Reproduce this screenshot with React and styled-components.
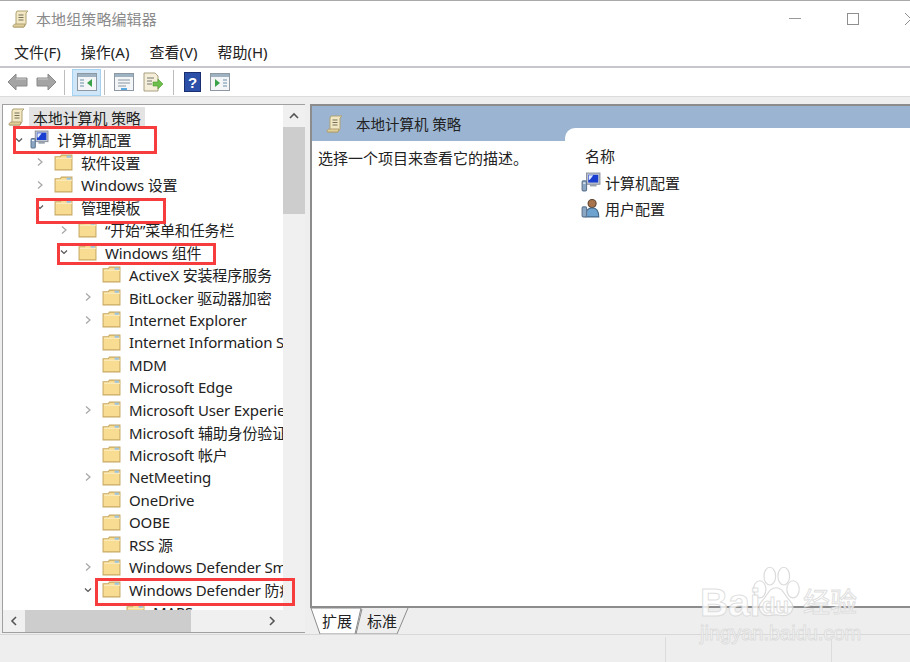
import React from 'react';
import styled, { createGlobalStyle } from 'styled-components';

const Global = createGlobalStyle`
  html, body { margin: 0; padding: 0; background: #fff; }
  body { font-family: "Noto Sans", "Noto Sans CJK SC", sans-serif; color: #222; }
`;

const Win = styled.div`
  position: relative;
  width: 910px;
  height: 662px;
  overflow: hidden;
  display: flex;
  flex-direction: column;
  background: #fff;
  border-top: 1px solid #a9a9a9;
  box-sizing: border-box;
`;

const TitleBar = styled.div`
  height: 35px;
  display: flex;
  align-items: center;
  padding-left: 12px;
  gap: 6px;
  flex-shrink: 0;
`;
const TitleText = styled.div`
  font-size: 15px;
  color: #8a8a8a;
  letter-spacing: 0.1px;
  flex: 1;
`;
const WinButtons = styled.div`
  display: flex;
  align-items: center;
`;
const MinBtn = styled.div`
  width: 12px;
  height: 1px;
  background: #9a9a9a;
  margin-right: 46px;
`;
const MaxBtn = styled.div`
  width: 10px;
  height: 10px;
  border: 1px solid #8f8f8f;
  margin-right: 46px;
`;
const CloseBtn = styled.svg`
  width: 12px;
  height: 12px;
  margin-right: -7px;
`;

const MenuBar = styled.div`
  height: 32px;
  display: flex;
  align-items: center;
  padding-left: 14px;
  gap: 20px;
  font-size: 15px;
  color: #222;
  border-bottom: 2px solid #c6c6cc;
  flex-shrink: 0;
  box-sizing: border-box;
`;

const ToolBar = styled.div`
  height: 28px;
  display: flex;
  align-items: center;
  padding-left: 7px;
  flex-shrink: 0;
`;
const ToolSep = styled.div`
  width: 1px;
  height: 25px;
  background: #bdbdbd;
  margin: 0 ${p => p.$gap || 3}px;
`;
const ToolBtn = styled.div`
  width: ${p => p.$w || 23}px;
  height: 27px;
  display: flex;
  align-items: center;
  justify-content: center;
  box-sizing: border-box;
  ${p => p.$active && 'background: #cfe6f8; border: 1px solid #a6d2f2;'}
`;

const Body = styled.div`
  flex: 1;
  background: #eeeeee;
  border-top: 1px solid #dcdcdc;
  display: flex;
  min-height: 0;
  padding: 7px 0 0 2px;
  gap: 5px;
`;

const LeftPane = styled.div`
  width: 303px;
  height: 529px;
  flex-shrink: 0;
  background: #fff;
  border: 1px solid #a0a0a0;
  box-sizing: border-box;
  display: grid;
  grid-template-columns: 280px 22px;
  grid-template-rows: 505px 22px;
`;
const Tree = styled.div`
  overflow: hidden;
  padding-top: 1px;
`;
const Row = styled.div`
  height: 22.5px;
  display: flex;
  align-items: center;
  white-space: nowrap;
  font-size: 15px;
  letter-spacing: -0.15px;
  padding-left: ${p => p.$indent}px;
  position: relative;
`;
const Chev = styled.svg`
  width: 8px;
  height: 8px;
  flex-shrink: 0;
  margin-right: ${p => p.$mr || 10}px;
`;
const NoChev = styled.div`
  width: 18px;
  flex-shrink: 0;
`;
const RowLabel = styled.span`
  margin-left: 8px;
  ${p => p.$sel && 'background: #e3e3e3; margin-left: 3px; padding: 0 4px;'}
`;
const VScroll = styled.div`
  background: #f0f0f0;
  display: flex;
  flex-direction: column;
  align-items: center;
`;
const VThumb = styled.div`
  width: 100%;
  height: 87px;
  background: #cdcdcd;
`;
const ScrollArrow = styled.div`
  height: 22px;
  width: 100%;
  display: flex;
  align-items: center;
  justify-content: center;
  flex-shrink: 0;
`;
const HScroll = styled.div`
  grid-column: 1 / 2;
  background: #f0f0f0;
  display: flex;
  align-items: center;
`;
const HThumb = styled.div`
  width: 166px;
  height: 100%;
  background: #cdcdcd;
`;
const HArrow = styled.div`
  width: 22px;
  height: 100%;
  display: flex;
  align-items: center;
  justify-content: center;
  flex-shrink: 0;
`;
const HSpace = styled.div`
  flex: 1;
`;
const Corner = styled.div`
  background: #f0f0f0;
`;

const RightCol = styled.div`
  flex: 1;
  display: flex;
  flex-direction: column;
  min-width: 0;
`;
const RightPane = styled.div`
  height: 504px;
  background: #fff;
  border: 2px solid #8c8c8c;
  border-right: none;
  box-sizing: border-box;
  position: relative;
  overflow: hidden;
`;
const Banner = styled.div`
  height: 35px;
  background: #9ab4d2;
  display: flex;
  align-items: center;
  padding-left: 14px;
  gap: 12px;
  font-size: 14.5px;
  color: #222;
`;
const Notch = styled.div`
  position: absolute;
  left: 253px;
  top: 22px;
  right: 0;
  height: 15px;
  background: #fff;
  border-top-left-radius: 10px;
`;
const Columns = styled.div`
  display: flex;
`;
const Desc = styled.div`
  width: 265px;
  padding: 6px 0 0 6px;
  font-size: 15px;
  box-sizing: border-box;
`;
const ListCol = styled.div`
  position: relative;
  font-size: 15px;
`;
const ColHead = styled.div`
  height: 28px;
  display: flex;
  align-items: center;
  padding-left: 8px;
`;
const ListRow = styled.div`
  height: 26px;
  display: flex;
  align-items: center;
  padding-left: 4px;
  gap: 4px;
`;

const Tabs = styled.div`
  height: 27px;
  display: flex;
  padding-left: 5px;
  position: relative;
`;
const TabSvg = styled.svg`
  position: absolute;
  left: 0;
  top: 0;
  width: 110px;
  height: 27px;
`;
const TabLabel = styled.span`
  position: relative;
  font-size: 15px;
  margin: 2px 0 0 ${p => p.$ml}px;
`;

const StatusBar = styled.div`
  position: absolute;
  left: 0;
  right: 0;
  bottom: 0;
  height: 27px;
  border-top: 1px solid #d8d8d8;
  background: #eeeeee;
`;
const StatusDiv = styled.div`
  position: absolute;
  top: 2px;
  bottom: 0;
  left: ${p => p.$x}px;
  width: 1px;
  background: #dcdcdc;
`;

const RedBox = styled.div`
  position: absolute;
  left: ${p => p.$x}px;
  top: ${p => p.$y}px;
  width: ${p => p.$w}px;
  height: ${p => p.$h}px;
  border: 3px solid #f63c3c;
  box-sizing: border-box;
  pointer-events: none;
`;

const Watermark = styled.div`
  position: absolute;
  left: 700px;
  top: 564px;
  width: 210px;
  height: 98px;
  color: rgba(255,255,255,0.8);
  font-family: "Liberation Sans", "Noto Sans CJK SC", sans-serif;
  pointer-events: none;
`;
const Mark = styled.div`
  position: absolute;
  left: ${p => p.$x}px;
  top: ${p => p.$y}px;
  font-size: ${p => p.$size}px;
  font-weight: ${p => p.$bold ? 700 : 400};
  line-height: 1;
  white-space: nowrap;
  -webkit-text-stroke: 1px rgba(215,215,215,0.8);
`;
const Paw = styled.svg`
  position: absolute;
  left: 52px;
  top: 1px;
`;

const Scroll = ({ size = 18 }) => (
  <svg width={size} height={size + 2} viewBox="0 0 18 20" style={{ flexShrink: 0 }}>
    <path d="M5 2h11l-2 2v11l-2 3H2l2-3V4z" fill="#f2e8c4" stroke="#b0a173" strokeWidth="1" />
    <path d="M1 18c0-2 1-3 3-3h9l-1 3z" fill="#e0cf9a" stroke="#b0a173" strokeWidth="1" />
    <path d="M6.5 6h5M6.5 8.5h5M6.5 11h5" stroke="#77705a" strokeWidth="1" />
  </svg>
);

const Folder = () => (
  <svg width="19" height="19" viewBox="0 0 18 18" style={{ flexShrink: 0 }}>
    <path d="M1 3.5h5l1-1.5h10v14H1z" fill="#f8dc92" stroke="#c8a964" strokeWidth="1" />
    <path d="M2 5h15" stroke="#fbeec2" strokeWidth="1" />
    <path d="M12 2.5h4v2h-4z" fill="#9cc3e0" />
  </svg>
);

const Computer = ({ size = 19 }) => (
  <svg width={size} height={size} viewBox="0 0 18 18" style={{ flexShrink: 0 }}>
    <rect x="5" y="1" width="12" height="10" fill="#c8ccd4" stroke="#8b93a0" />
    <rect x="6.5" y="2.5" width="9" height="7" fill="#1a3fd0" />
    <path d="M7 3h4l-3 4H7z" fill="#dfe9ff" />
    <path d="M8 11h6v2H8z" fill="#9aa2ae" />
    <rect x="1" y="8" width="4" height="9" rx="1" fill="#8ba7c4" stroke="#5f7690" />
    <path d="M2 10h2" stroke="#fff" />
  </svg>
);

const UserIcon = () => (
  <svg width="20" height="20" viewBox="0 0 18 18" style={{ flexShrink: 0 }}>
    <circle cx="10" cy="5" r="3.6" fill="#a9744c" stroke="#5f4330" />
    <path d="M4 17c0-5 2-8 6-8s6 3 6 8z" fill="#6fa3cf" stroke="#44698a" />
    <rect x="1" y="8" width="4" height="9" rx="1" fill="#8ba7c4" stroke="#5f7690" />
  </svg>
);

const Right = () => (
  <Chev viewBox="0 0 8 8"><path d="M2 0.5L6 4L2 7.5" fill="none" stroke="#a6a6a6" strokeWidth="1.2" /></Chev>
);
const Down = ({ mr }) => (
  <Chev $mr={mr} viewBox="0 0 8 8"><path d="M1 2.5L4 5.5L7 2.5" fill="none" stroke="#555" strokeWidth="1.2" /></Chev>
);

const Arrow = ({ flip }) => (
  <svg width="21" height="20" viewBox="0 0 21 20" style={flip ? { transform: 'scaleX(-1)' } : undefined}>
    <path d="M1 10l8-8v4h11v8H9v4z" fill="#a4a4a4" stroke="#8a8a8a" />
    <path d="M9 7h10" stroke="#c9c9c9" />
  </svg>
);

const WindowGlyph = ({ children }) => (
  <svg width="20" height="18" viewBox="0 0 20 18">
    <rect x="0.5" y="0.5" width="19" height="17" fill="#f3f5f6" stroke="#8d98a3" />
    <rect x="1" y="1" width="18" height="3" fill="#9fb2c2" />
    {children}
  </svg>
);

const rows = [
  { icon: 'computer', label: '计算机配置', indent: 12, open: true, mr: 7 },
  { label: '软件设置', indent: 33, closed: true },
  { label: 'Windows 设置', indent: 33, closed: true },
  { label: '管理模板', indent: 33, open: true },
  { label: '“开始”菜单和任务栏', indent: 57, closed: true },
  { label: 'Windows 组件', indent: 57, open: true },
  { label: 'ActiveX 安装程序服务', indent: 81 },
  { label: 'BitLocker 驱动器加密', indent: 81, closed: true },
  { label: 'Internet Explorer', indent: 81, closed: true },
  { label: 'Internet Information Services', indent: 81 },
  { label: 'MDM', indent: 81 },
  { label: 'Microsoft Edge', indent: 81 },
  { label: 'Microsoft User Experience', indent: 81, closed: true },
  { label: 'Microsoft 辅助身份验证器', indent: 81 },
  { label: 'Microsoft 帐户', indent: 81 },
  { label: 'NetMeeting', indent: 81, closed: true },
  { label: 'OneDrive', indent: 81 },
  { label: 'OOBE', indent: 81 },
  { label: 'RSS 源', indent: 81 },
  { label: 'Windows Defender SmartScreen', indent: 81, closed: true },
  { label: 'Windows Defender 防病毒程序', indent: 81, open: true },
  { label: 'MAPS', indent: 105 },
];

const Small = ({ d }) => (
  <svg width="10" height="10" viewBox="0 0 10 10"><path d={d} fill="none" stroke="#555" strokeWidth="1.6" /></svg>
);

export default function App() {
  return (
    <Win>
      <Global />
      <TitleBar>
        <Scroll />
        <TitleText>本地组策略编辑器</TitleText>
        <WinButtons>
          <MinBtn />
          <MaxBtn />
          <CloseBtn viewBox="0 0 12 12"><path d="M0 0L12 12M12 0L0 12" stroke="#8f8f8f" /></CloseBtn>
        </WinButtons>
      </TitleBar>
      <MenuBar>
        <span>文件(F)</span>
        <span>操作(A)</span>
        <span>查看(V)</span>
        <span>帮助(H)</span>
      </MenuBar>
      <ToolBar>
        <Arrow />
        <ToolBtn $w={8} />
        <Arrow flip />
        <ToolSep $gap={7} />
        <ToolBtn $w={29} $active>
          <WindowGlyph>
            <path d="M3 7h4M3 10h4M3 13h4" stroke="#6a8fa8" />
            <path d="M15 6v8l-5-4z" fill="#3aa34a" />
          </WindowGlyph>
        </ToolBtn>
        <ToolSep />
        <ToolBtn $w={31}>
          <WindowGlyph>
            <path d="M4 7h12M4 10h12M4 13h8" stroke="#8a97a3" />
            <rect x="7" y="15" width="6" height="2" fill="#59a9e0" />
          </WindowGlyph>
        </ToolBtn>
        <ToolBtn $w={28}>
          <svg width="21" height="20" viewBox="0 0 21 20">
            <path d="M1 1h11l3 3v15H1z" fill="#f5efd9" stroke="#a9a081" />
            <path d="M4 6h7M4 9h5M4 12h5" stroke="#777" />
            <path d="M10 10h5V7l5 5-5 5v-3h-5z" fill="#6cc04a" stroke="#4b9a34" strokeWidth="0.6" />
          </svg>
        </ToolBtn>
        <ToolSep $gap={6} />
        <ToolBtn $w={24}>
          <svg width="17" height="20" viewBox="0 0 17 20">
            <rect width="17" height="20" fill="#2c4fa8" />
            <rect x="0.5" y="0.5" width="16" height="19" fill="none" stroke="#1a2f70" />
            <text x="8.5" y="15.5" textAnchor="middle" fontSize="15" fontWeight="700" fontFamily="Liberation Sans" fill="#fff">?</text>
          </svg>
        </ToolBtn>
        <ToolBtn $w={32}>
          <WindowGlyph>
            <path d="M5 6v8l5-4z" fill="#3aa34a" />
            <path d="M13 7h4M13 10h4M13 13h4" stroke="#6a8fa8" />
          </WindowGlyph>
        </ToolBtn>
      </ToolBar>
      <Body>
        <LeftPane>
          <Tree>
            <Row $indent={5}>
              <Scroll />
              <RowLabel $sel>本地计算机 策略</RowLabel>
            </Row>
            {rows.map(r => (
              <Row $indent={r.indent} key={r.label}>
                {r.open ? <Down mr={r.mr} /> : r.closed ? <Right /> : <NoChev />}
                {r.icon === 'computer' ? <Computer /> : <Folder />}
                <RowLabel>{r.label}</RowLabel>
              </Row>
            ))}
          </Tree>
          <VScroll>
            <ScrollArrow><Small d="M1 7l4-4 4 4" /></ScrollArrow>
            <VThumb />
          </VScroll>
          <HScroll>
            <HArrow><Small d="M7 1L3 5l4 4" /></HArrow>
            <HThumb />
            <HSpace />
            <HArrow><Small d="M3 1l4 4-4 4" /></HArrow>
          </HScroll>
          <Corner />
        </LeftPane>
        <RightCol>
          <RightPane>
            <Banner>
              <Scroll />
              <span>本地计算机 策略</span>
            </Banner>
            <Notch />
            <Columns>
              <Desc>选择一个项目来查看它的描述。</Desc>
              <ListCol>
                <ColHead>名称</ColHead>
                <ListRow><Computer size={20} />计算机配置</ListRow>
                <ListRow><UserIcon />用户配置</ListRow>
              </ListCol>
            </Columns>
          </RightPane>
          <Tabs>
            <TabSvg viewBox="0 0 110 27">
              <path d="M1 0l9 26h35l6-26z" fill="#fff" stroke="#8c8c8c" />
              <path d="M52 1l-6 25h41l11-26" fill="#eee" stroke="#8c8c8c" />
            </TabSvg>
            <TabLabel $ml={7}>扩展</TabLabel>
            <TabLabel $ml={15}>标准</TabLabel>
          </Tabs>
        </RightCol>
      </Body>
      <StatusBar>
        <StatusDiv $x={665} />
        <StatusDiv $x={831} />
      </StatusBar>
      <RedBox $x={13} $y={125} $w={144} $h={28} />
      <RedBox $x={36} $y={197} $w={130} $h={26} />
      <RedBox $x={57} $y={242} $w={159} $h={22} />
      <RedBox $x={95} $y={577} $w={200} $h={28} />
      <Watermark>
        <Paw width="48" height="52" viewBox="0 0 62 67">
          <g fill="rgba(255,255,255,0.65)" stroke="rgba(215,215,215,0.9)" strokeWidth="1.5">
            <ellipse cx="10" cy="30" rx="8" ry="11" />
            <ellipse cx="23" cy="13" rx="7.5" ry="11.5" />
            <ellipse cx="41" cy="13" rx="7.5" ry="11.5" />
            <ellipse cx="53" cy="30" rx="8" ry="11" />
            <path d="M31 28c-9 0-11 10-18 17-8 8-2 20 9 19 4 0 6-1 9-1s6 1 9 1c11 1 17-11 9-19-7-7-9-17-18-17z" />
          </g>
        </Paw>
        <Mark $x={0} $y={18} $size={39} $bold>Bai</Mark>
        <Mark $x={62} $y={30} $size={22} $bold>du</Mark>
        <Mark $x={103} $y={25} $size={27}>经验</Mark>
        <Mark $x={0} $y={58} $size={20}>jingyan.baidu.com</Mark>
      </Watermark>
    </Win>
  );
}
